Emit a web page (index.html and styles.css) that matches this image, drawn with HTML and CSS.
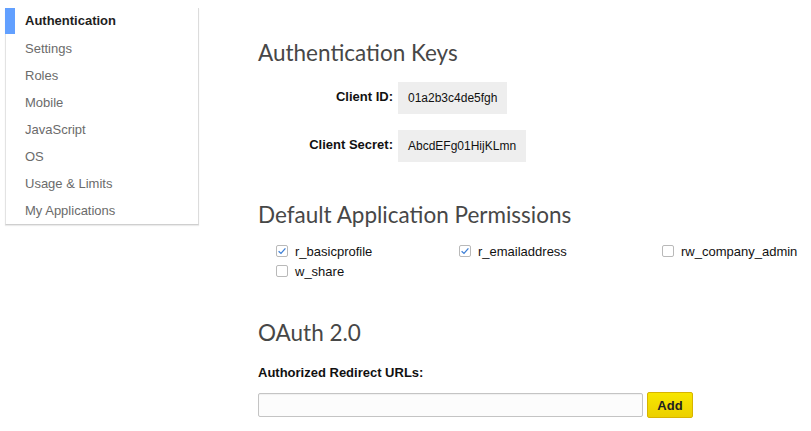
FILE: index.html
```html
<!DOCTYPE html>
<html>
<head>
<meta charset="utf-8">
<link rel="stylesheet" href="styles.css">
</head>
<body>
<div class="page">
  <nav class="sidebar">
    <a class="nav-item active">Authentication</a>
    <a class="nav-item">Settings</a>
    <a class="nav-item">Roles</a>
    <a class="nav-item">Mobile</a>
    <a class="nav-item">JavaScript</a>
    <a class="nav-item">OS</a>
    <a class="nav-item">Usage &amp; Limits</a>
    <a class="nav-item">My Applications</a>
  </nav>
  <main class="content">
    <h1 class="section-title title-keys">Authentication Keys</h1>
    <div class="keys">
      <div class="key-label">Client ID:</div>
      <div class="key-value">01a2b3c4de5fgh</div>
      <div class="key-label">Client Secret:</div>
      <div class="key-value">AbcdEFg01HijKLmn</div>
    </div>

    <h2 class="section-title title-perms">Default Application Permissions</h2>
    <div class="perms">
      <label class="perm"><span class="box checked"><svg viewBox="0 0 12 12" width="12" height="12"><path d="M2.6 6.2 L5 8.4 L9.4 3.4" fill="none" stroke="#3d7fd6" stroke-width="1.3"/></svg></span>r_basicprofile</label>
      <label class="perm"><span class="box checked"><svg viewBox="0 0 12 12" width="12" height="12"><path d="M2.6 6.2 L5 8.4 L9.4 3.4" fill="none" stroke="#3d7fd6" stroke-width="1.3"/></svg></span>r_emailaddress</label>
      <label class="perm"><span class="box"></span>rw_company_admin</label>
      <label class="perm"><span class="box"></span>w_share</label>
    </div>

    <h2 class="section-title title-oauth">OAuth 2.0</h2>
    <div class="field-label">Authorized Redirect URLs:</div>
    <div class="url-row">
      <input class="url-input" type="text">
      <button class="add-btn">Add</button>
    </div>
  </main>
</div>
</body>
</html>
```
FILE: styles.css
```css
* { box-sizing: border-box; }
html, body {
  margin: 0;
  padding: 0;
  background: #fff;
}
body {
  font-family: "Liberation Sans", Arial, sans-serif;
  font-size: 13px;
  color: #222;
}
.page {
  display: flex;
  align-items: flex-start;
  padding: 8px 0 0 5px;
}
.sidebar {
  width: 194px;
  flex: none;
  display: flex;
  flex-direction: column;
  background: #fff;
  border-left: 1px solid #e3e3e3;
  border-right: 1px solid #dcdcdc;
  border-bottom: 1px solid #cfcfcf;
  box-shadow: 0 1px 1px rgba(0,0,0,0.08);
}
.nav-item {
  display: block;
  height: 27px;
  line-height: 27px;
  padding-left: 19px;
  color: #6b6b6b;
  font-size: 13px;
  text-decoration: none;
}
.nav-item.active {
  color: #1e1e1e;
  font-weight: bold;
  border-left: 10px solid #62a0ff;
  margin-left: -1px;
  padding-left: 10px;
  height: 26px;
  line-height: 26px;
  margin-bottom: 1px;
}
.content {
  margin-left: 59px;
  flex: 1;
}
.section-title {
  font-family: Lato, "Open Sans", sans-serif;
  font-weight: 400;
  font-size: 22.5px;
  color: #474747;
  margin: 0;
  line-height: 30px;
}
.title-keys { margin-top: 30px; }
.keys {
  display: grid;
  grid-template-columns: 135px auto;
  column-gap: 5px;
  row-gap: 16px;
  justify-content: start;
  align-items: center;
  margin-top: 14px;
}
.key-label {
  text-align: right;
  font-weight: bold;
  color: #111;
  font-size: 13px;
  padding-bottom: 4px;
}
.key-value {
  justify-self: start;
  background: #eeeeee;
  height: 32px;
  line-height: 32px;
  padding: 0 10px;
  font-size: 12px;
  color: #111;
}
.title-perms { margin-top: 38px; }
.perms {
  display: grid;
  grid-template-columns: 183px 203px auto;
  row-gap: 2px;
  margin-top: 12px;
  padding-left: 18px;
}
.perm {
  display: flex;
  align-items: center;
  height: 18px;
  font-size: 13px;
  color: #111;
}
.box {
  display: inline-block;
  width: 12px;
  height: 12px;
  border: 1px solid #b9b9b9;
  border-radius: 2px;
  background: #fff;
  margin-right: 7px;
  position: relative;
}
.box svg {
  position: absolute;
  left: -1px;
  top: -1px;
}
.title-oauth { margin-top: 38px; }
.field-label {
  font-weight: bold;
  font-size: 13px;
  color: #111;
  margin-top: 17px;
}
.url-row {
  display: flex;
  align-items: center;
  gap: 4px;
  margin-top: 12px;
}
.url-input {
  width: 385px;
  height: 24px;
  border: 1px solid #c4c4c4;
  border-radius: 2px;
  background: #fcfcfc;
  margin: 0;
  padding: 0 4px;
  box-shadow: inset 0 1px 1px rgba(0,0,0,0.05);
}
.add-btn {
  width: 46px;
  height: 26px;
  margin: 0;
  border: 1px solid #d8b400;
  border-radius: 2px;
  background: linear-gradient(#f7e600, #ecd000);
  font-family: "Liberation Sans", Arial, sans-serif;
  font-weight: bold;
  font-size: 13px;
  color: #222;
  padding: 0;
}
```
